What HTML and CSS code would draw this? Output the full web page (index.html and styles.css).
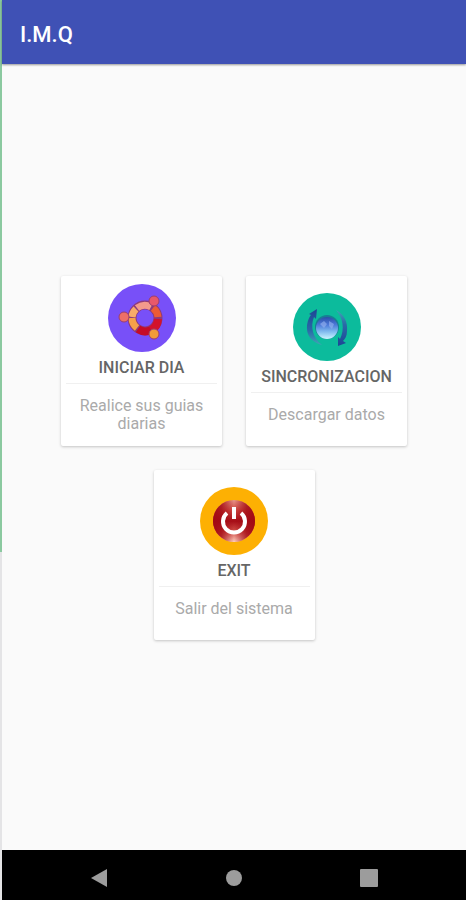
FILE: index.html
```html
<!DOCTYPE html>
<html lang="es">
<head>
  <meta charset="UTF-8">
  <meta name="viewport" content="width=device-width, initial-scale=1.0">
  <title>I.M.Q</title>
  <link rel="stylesheet" href="styles.css">
</head>
<body>
  <!-- App Bar -->
  <header class="app-bar">
    <h1>I.M.Q</h1>
  </header>

  <!-- Menu Cards -->
  <main class="menu">
    <button class="card" type="button">
      <svg class="icon" viewBox="0 0 68 68" aria-hidden="true">
        <circle cx="34" cy="34" r="34" fill="#7850f8"/>
        <g fill="none" stroke-width="7">
          <circle cx="37" cy="34" r="13" stroke="#8d3b7c" stroke-width="9"/>
          <path d="M29 24 A13 13 0 0 1 43 23" stroke="#f39a8c"/>
          <path d="M45 24 A13 13 0 0 1 50 33" stroke="#ec5a36"/>
          <path d="M50 35 A13 13 0 0 1 43 46" stroke="#d3122b" stroke-width="8"/>
          <path d="M43 46 A13 13 0 0 1 30 45" stroke="#c40b27" stroke-width="8"/>
          <path d="M29 44 A13 13 0 0 1 24 34" stroke="#f6a04a"/>
          <path d="M24 33 A13 13 0 0 1 28 25" stroke="#f7ab69"/>
        </g>
        <g stroke="#9b3f70" stroke-width="1">
          <circle cx="46" cy="17" r="5" fill="#e8586a"/>
          <circle cx="16" cy="33" r="5" fill="#ed6f67"/>
          <circle cx="46" cy="50" r="5" fill="#f29b38"/>
        </g>
      </svg>
      <span class="title">INICIAR DIA</span>
      <span class="text">Realice sus guias diarias</span>
    </button>

    <button class="card" type="button">
      <svg class="icon" viewBox="0 0 68 68" aria-hidden="true">
        <defs>
          <linearGradient id="globe" x1="0" y1="0" x2="0" y2="1">
            <stop offset="0" stop-color="#2b4fa8"/>
            <stop offset="0.35" stop-color="#4c78d8"/>
            <stop offset="0.65" stop-color="#7db8ee"/>
            <stop offset="1" stop-color="#c9f6ff"/>
          </linearGradient>
          <linearGradient id="arrow-up" x1="0" y1="0" x2="0" y2="1">
            <stop offset="0" stop-color="#1d4595"/>
            <stop offset="0.6" stop-color="#2a6aa8"/>
            <stop offset="1" stop-color="#3fa5b4"/>
          </linearGradient>
          <linearGradient id="arrow-down" x1="0" y1="1" x2="0" y2="0">
            <stop offset="0" stop-color="#1d4595"/>
            <stop offset="0.6" stop-color="#2a6aa8"/>
            <stop offset="1" stop-color="#3fa5b4"/>
          </linearGradient>
        </defs>
        <circle cx="34" cy="34" r="34" fill="#0cbb9c"/>
        <circle cx="34" cy="34" r="12" fill="#187f94"/>
        <circle cx="34" cy="35" r="11" fill="url(#globe)"/>
        <path d="M27 31 L31 28 L34 31 L31 35 Z M36 28 L41 31 L39 36 L36 33 Z" fill="#9ab6f0" opacity="0.6"/>
        <path d="M29 52 C18 49 13 42 14 32 C15 27 16 24 18 22 L16 21 L24 16 L23 26 L21 24 C17 34 20 45 29 52 Z" fill="url(#arrow-up)"/>
        <path d="M43 17 C51 21 55 29 54 38 C54 43 52 46 50 48 L53 50 L45 53 L45 44 L47 46 C52 36 50 25 43 17 Z" fill="url(#arrow-down)"/>
      </svg>
      <span class="title">SINCRONIZACION</span>
      <span class="text">Descargar datos</span>
    </button>

    <button class="card" type="button">
      <svg class="icon" viewBox="0 0 68 68" aria-hidden="true">
        <defs>
          <linearGradient id="power" x1="0" y1="0" x2="0" y2="1">
            <stop offset="0" stop-color="#e8978a"/>
            <stop offset="0.25" stop-color="#d04a42"/>
            <stop offset="0.5" stop-color="#a60d16"/>
            <stop offset="0.75" stop-color="#d4524a"/>
            <stop offset="1" stop-color="#ffd2c2"/>
          </linearGradient>
          <linearGradient id="shade">
            <stop offset="0" stop-color="#a30a14"/>
            <stop offset="0.2" stop-color="#a30a14" stop-opacity="0.8"/>
            <stop offset="0.5" stop-color="#a30a14" stop-opacity="0"/>
            <stop offset="0.8" stop-color="#a30a14" stop-opacity="0.8"/>
            <stop offset="1" stop-color="#a30a14"/>
          </linearGradient>
        </defs>
        <circle cx="34" cy="34" r="34" fill="#fdb003"/>
        <circle cx="34" cy="34" r="21" fill="url(#power)"/>
        <circle cx="34" cy="34" r="21" fill="url(#shade)"/>
        <path d="M27 26 A11 11 0 1 0 41 26" fill="none" stroke="#fff" stroke-width="4"/>
        <path d="M34 20 V32" fill="none" stroke="#fff" stroke-width="4"/>
      </svg>
      <span class="title">EXIT</span>
      <span class="text">Salir del sistema</span>
    </button>
  </main>

  <!-- System Navigation -->
  <nav class="nav-bar">
    <button type="button" aria-label="Atras">
      <svg viewBox="0 0 18 18"><path d="M1 9 L17 0 V18 Z"/></svg>
    </button>
    <button type="button" aria-label="Inicio">
      <svg viewBox="0 0 18 18"><circle cx="9" cy="9" r="8"/></svg>
    </button>
    <button type="button" aria-label="Recientes">
      <svg viewBox="0 0 18 18"><rect width="18" height="18" rx="1"/></svg>
    </button>
  </nav>
</body>
</html>
```
FILE: styles.css
```css
* {
  box-sizing: border-box;
}

body {
  margin: 0;
  min-height: 100vh;
  padding-left: 2px;
  display: flex;
  flex-direction: column;
  background: linear-gradient(#8bc9a0 0 552px, #e4e4e6 552px) left / 2px 100% no-repeat #fafafa;
  font-family: Roboto, sans-serif;
}

button {
  border: none;
  font-family: inherit;
  cursor: pointer;
}

/* App Bar */
.app-bar {
  height: 64px;
  padding: 4px 18px 0;
  display: flex;
  align-items: center;
  background-color: #3f51b5;
  box-shadow: 0 1px 2px rgba(0, 0, 0, 0.4);
}

.app-bar h1 {
  margin: 0;
  color: white;
  font-size: 22px;
  font-weight: 500;
}

/* Menu Cards */
.menu {
  flex: 1;
  padding: 2px 16px 0;
  display: flex;
  flex-wrap: wrap;
  justify-content: center;
  align-content: center;
  gap: 24px;
}

.card {
  width: 161px;
  min-height: 170px;
  padding: 8px 5px;
  display: flex;
  flex-direction: column;
  align-items: center;
  justify-content: center;
  background-color: white;
  border-radius: 2px;
  box-shadow: 0 1px 3px rgba(0, 0, 0, 0.22);
}

.icon {
  width: 68px;
  height: 68px;
}

.title {
  width: 100%;
  padding: 6px 0 5px;
  border-bottom: 1px solid #f0f0f0;
  color: #666666;
  font-size: 16px;
  font-weight: 500;
  line-height: 20px;
}

.text {
  padding: 13px 8px 5px;
  color: #aaaaaa;
  font-size: 16px;
  line-height: 18px;
}

/* System Navigation */
.nav-bar {
  height: 50px;
  padding: 5px 30px 0;
  display: grid;
  grid-template-columns: repeat(3, 1fr);
  background-color: black;
}

.nav-bar button {
  padding: 0;
  display: flex;
  align-items: center;
  justify-content: center;
  background: none;
}

.nav-bar svg {
  width: 18px;
  height: 18px;
  fill: #9c9c9c;
}
```
